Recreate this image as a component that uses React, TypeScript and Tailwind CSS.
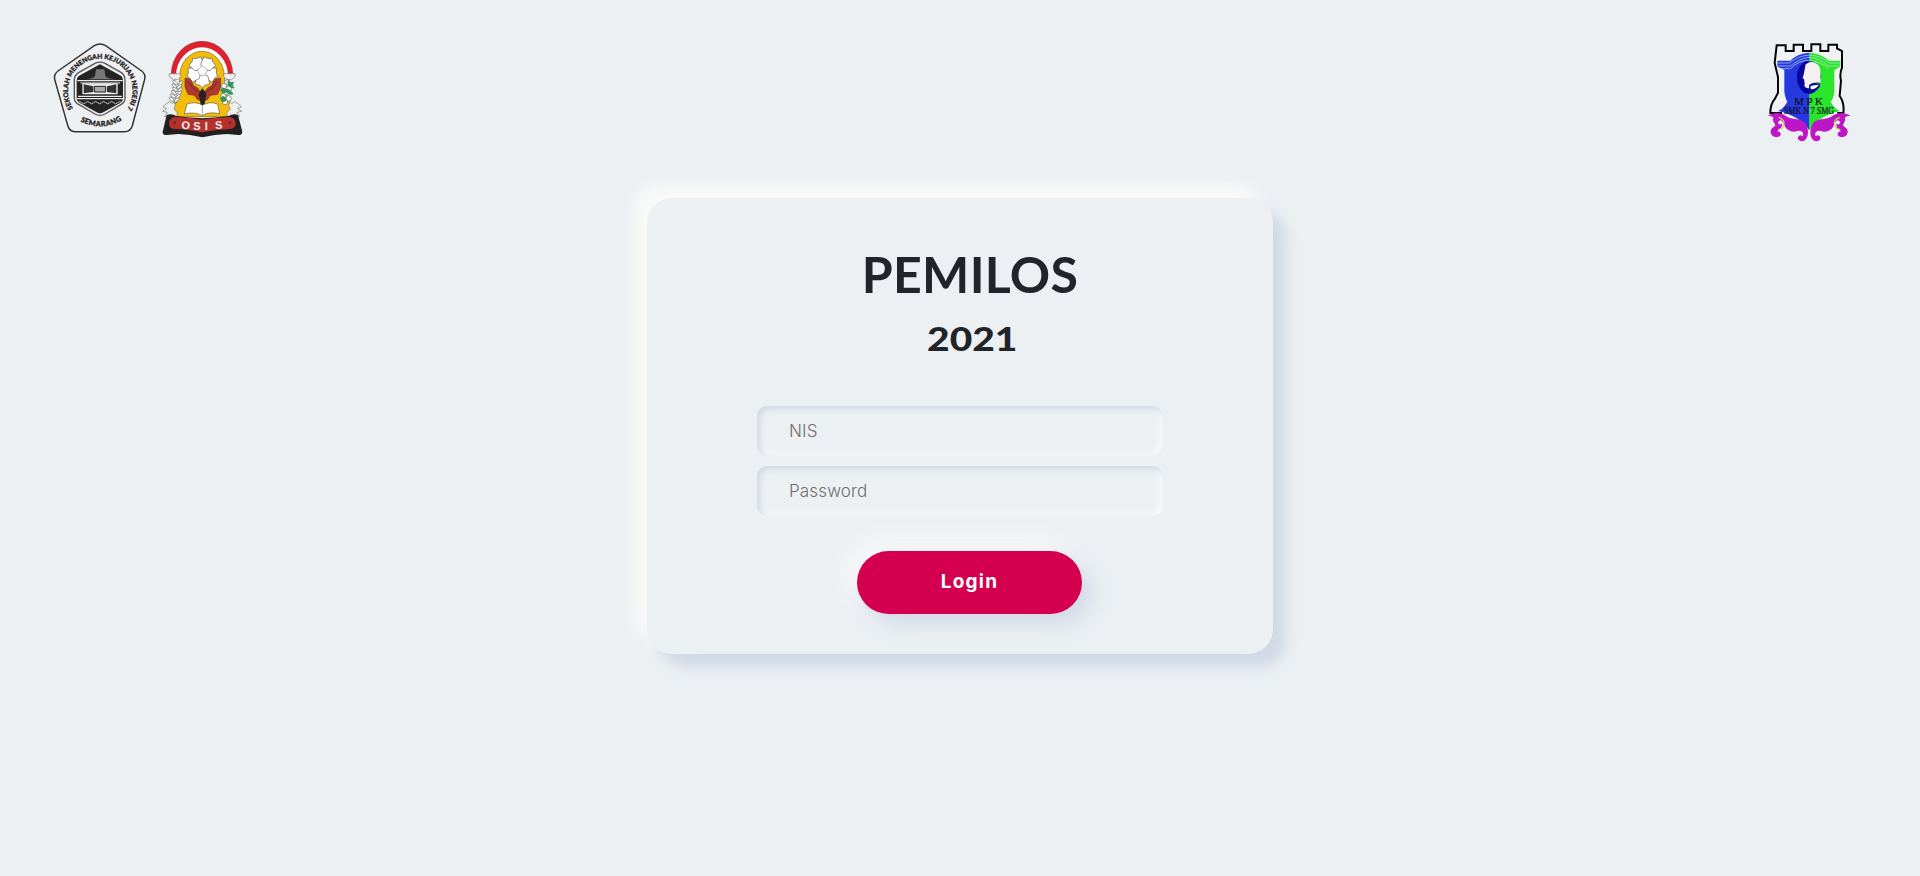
import React from "react";

function SchoolLogo() {
  return (
    <svg width="110" height="105" viewBox="0 0 330 315" role="img">
      <defs>
        <path id="ringTop" d="M84 220 A97 97 0 1 1 242 228" />
        <path id="ringBottom" d="M83 242 A122 122 0 0 0 248 242" />
      </defs>
      <path d="M148 32 Q165 22 182 32 L290 108 Q303 118 299 133 L262 272 Q256 290 239 290 L90 290 Q74 290 69 274 L29 133 Q26 118 39 108 Z" fill="#eef0f2" stroke="#333" strokeWidth="4.5" />
      <path d="M150 85 Q165 78 180 85 L228 112 Q240 120 240 134 L240 190 Q240 202 228 209 L180 237 Q165 245 150 237 L102 209 Q88 202 88 188 L88 134 Q88 120 102 112 Z" fill="#eee" stroke="#555" strokeWidth="4" />
      <path d="M165 88 L229 123 Q234 128 234 137 L234 190 Q234 198 227 203 L175 232 Q165 238 155 232 L103 203 Q95 198 95 190 L95 137 Q95 128 101 123 Z" fill="#242424" />
      <path d="M153 103 H178 L181 123 Q187 131 211 133 H119 Q145 132 150 123 Z" fill="#777" />
      <path d="M97 137 H233 M106 144 H225 M99 184 H231 M96 191 H234" stroke="#e8e8e8" strokeWidth="3.5" />
      <path d="M112 145 H218 V178 H112 Z" fill="#eee" />
      <path d="M116 148 L145 154 V171 L116 175 Z M214 148 L186 154 V171 L214 175 Z" fill="#333" />
      <path d="M148 154 H182 V171 H148 Z" fill="#aaa" stroke="#222" strokeWidth="3" />
      <path d="M98 203 q6 -7 12 0 t12 0 t12 0 t12 0 t12 0 t12 0 t12 0 t12 0 t12 0 t12 0 t12 0" fill="none" stroke="#c5c5c5" strokeWidth="3" />
      <g fill="#222" stroke="#222" strokeWidth="0.9" fontFamily="Lato, sans-serif" fontWeight="900">
        <text fontSize="20"><textPath href="#ringTop">SEKOLAH MENENGAH KEJURUAN NEGERI 7</textPath></text>
        <text fontSize="22" letterSpacing="1"><textPath href="#ringBottom" startOffset="28">SEMARANG</textPath></text>
      </g>
    </svg>
  );
}

const petals = [18, 90, 162, 234, 306];
const leftGrains = [[68, 143], [65, 153], [67, 163], [64, 173], [61, 183], [57, 193]];
const cottonBolls = [[217, 142], [207, 153], [222, 161], [213, 172], [205, 184], [221, 190], [210, 201]];

function OsisLogo() {
  return (
    <svg width="95" height="105" viewBox="0 0 285 315" role="img">
      <path d="M49 118 A92 99 0 0 1 233 118 H218 V240 H66 V118 Z" fill="#e0202e" stroke="#8b3035" strokeWidth="2" />
      <path d="M63 122 A78 85 0 0 1 219 122 V220 H63 Z" fill="#fff" />
      <path d="M74 125 A67 76 0 0 1 208 125 C211 150 211 172 220 193 Q232 215 232 245 H50 Q50 218 63 194 C73 171 73 150 74 125 Z" fill="#f2bd09" stroke="#836617" strokeWidth="2" />
      <path d="M43 116 H77 V125 L69 134 H55 L43 125 Z M206 116 H240 V125 L230 134 H216 L206 125 Z" fill="#eee" stroke="#777" strokeWidth="2" />
      <path d="M90 129 L108 133 L115 151 L129 160 L140 178 L137 198 L127 193 L118 181 L99 178 L90 155 Z M197 129 L178 133 L171 151 L157 160 L145 178 L148 198 L158 193 L166 181 L188 178 L197 155 Z" fill="#b3362f" stroke="#713029" strokeWidth="2" />
      <path d="M99 140 L112 158 L130 171 M186 140 L174 158 L154 171" fill="none" stroke="#5e342c" strokeWidth="3" />
      <g fill="#fff" stroke="#626262" strokeWidth="2">
        {petals.map((angle) => (
          <path key={angle} transform={`translate(142 109) rotate(${angle})`} d="M4 0 L15 -17 L38 -22 L42 -7 L49 0 L42 7 L38 22 L15 17 Z" />
        ))}
        <path d="M142 93 L157 104 L151 121 H133 L127 104 Z" fill="#fafafa" stroke="#999" />
      </g>
      <path d="M142 160 Q126 178 134 189 L137 211 H149 L151 189 Q159 177 142 160 Z" fill="#222" />
      <path d="M96 207 Q126 198 142 211 Q161 198 188 207 L194 236 Q160 229 142 242 Q121 229 88 237 Z" fill="#fff" stroke="#5c5c51" strokeWidth="2" />
      <path d="M142 211 V239" stroke="#777" strokeWidth="2" />
      <path d="M78 137 C70 157 81 178 61 208" fill="none" stroke="#666" strokeWidth="2" />
      <g fill="#fff" stroke="#626262" strokeWidth="2">
        {leftGrains.map(([x, y]) => (
          <React.Fragment key={y}>
            <ellipse cx={x - 7} cy={y} rx="9" ry="4" transform={`rotate(43 ${x - 7} ${y})`} />
            <ellipse cx={x + 8} cy={y + 2} rx="9" ry="4" transform={`rotate(-43 ${x + 8} ${y + 2})`} />
          </React.Fragment>
        ))}
        {cottonBolls.map(([x, y]) => <circle key={y} cx={x} cy={y} r="8" />)}
      </g>
      <path d="M219 137 L227 143 L235 142 L232 151 L237 159 L225 156 L219 150 Z M202 159 L211 163 L219 164 L213 173 L201 172 L197 166 Z M219 163 L227 168 L234 177 L226 178 L217 174 Z M202 184 L213 188 L211 198 L202 200 L196 191 Z" fill="#31965b" stroke="#31965b" strokeWidth="3" />
      <path d="M29 210 L44 199 L52 206 L57 201 L61 210 L57 222 L66 232 V245 H29 L37 232 L23 229 L35 221 L24 216 Z M254 210 L239 199 L231 206 L226 201 L221 210 L226 222 L216 232 V245 H254 L246 232 L260 229 L248 221 L259 216 Z" fill="#eee" stroke="#777" strokeWidth="2" />
      <path d="M35 240 Q50 234 64 243 Q142 256 220 243 Q236 234 249 240 L262 290 Q262 300 250 300 L216 297 Q180 298 142 307 Q104 298 70 297 L35 300 Q22 300 23 290 Z" fill="#202020" />
      <path d="M58 246 Q97 247 142 254 Q187 247 226 246 Q244 252 242 268 Q240 281 226 282 Q187 283 142 292 Q96 283 58 282 Q42 280 42 266 Q42 250 58 246 Z" fill="#b6312e" />
      <circle cx="59" cy="263" r="4" fill="#5e2928" />
      <circle cx="225" cy="263" r="4" fill="#5e2928" />
      <g fill="#f5eeee" fontFamily="Liberation Sans, sans-serif" fontWeight="700" fontSize="33">
        <text x="79" y="281" transform="rotate(4 80 281)">O</text>
        <text x="115" y="284">S</text>
        <text x="149" y="284">I</text>
        <text x="181" y="282" transform="rotate(-3 180 283)">S</text>
      </g>
    </svg>
  );
}

function Scroll() {
  return (
    <>
      <path d="M30 241 C52 231 67 237 80 247 C95 258 113 249 131 262 C142 272 146 298 137 310 C130 321 113 317 116 307 C119 300 129 304 129 307 C137 290 123 283 112 286 C98 292 82 284 77 274 C73 256 63 250 55 257 C48 264 58 274 64 269 C64 284 50 282 48 294 C58 287 66 299 55 303 C35 308 26 287 43 277 C57 267 36 263 42 250 Q44 243 30 241 Z" fill="#bd16c7" stroke="#bd16c7" strokeWidth="4" />
      <path d="M56 247 Q78 255 70 272 Q66 282 54 284" fill="none" stroke="#d3cf62" strokeWidth="3.5" />
    </>
  );
}

function MpkLogo() {
  return (
    <svg width="100" height="112" viewBox="0 0 300 336" role="img">
      <path d="M50 31 H77 V48 H101 V29 H129 V48 H154 V28 H181 V48 H205 V29 H231 V48 H246 V98 Q238 117 243 137 L239 183 Q254 204 250 234 H36 Q31 207 45 191 L54 173 V126 L44 84 Z" fill="#f1f2f3" />
      <path d="M66 234 H31 Q31 207 45 191 L54 173 V126 L44 84 L50 31 H77 V48 H101 V29 H129 V48 H154 V28 H181 V48 H205 V29 H231 V40 L246 48 V98 Q238 117 243 137 L239 183 Q254 204 250 234 H232" fill="none" stroke="#050505" strokeWidth="6" />
      <path d="M148 53 Q182 55 207 77 H241 V95 L223 105 V170 Q221 190 212 200 Q224 222 240 228 Q177 242 148 286 Z" fill="#2be52a" />
      <path d="M148 53 Q113 55 91 77 H52 V95 L73 105 V170 Q76 190 82 200 Q70 222 54 228 Q119 242 148 286 Z" fill="#2639e1" />
      <path d="M52 84 H88 Q115 62 148 60 Q184 63 208 84 H241 M52 93 H91 Q120 69 148 67 Q179 70 205 93 H241 M58 101 H91" fill="none" stroke="#c9e7f4" strokeOpacity="0.75" strokeWidth="2.5" />
      <path d="M91 101 Q117 75 148 76 Q184 80 207 101" fill="none" stroke="#e1f0f2" strokeOpacity="0.75" strokeWidth="2.5" />
      <ellipse cx="147" cy="127" rx="36" ry="50" fill="#06069c" />
      <path d="M148 77 Q183 82 184 126 Q181 161 148 176 Z" fill="#168b41" />
      <path d="M137 88 Q157 74 174 89 Q185 101 181 125 L183 145 Q172 139 162 145 L150 150 Q153 161 144 160 Q130 157 134 146 L132 132 Q125 132 131 119 Z" fill="#f5eff0" />
      <path d="M147 151 Q163 134 181 154 Q164 174 148 176 Z" fill="#06069c" />
      <path d="M151 154 Q163 149 176 150 Q166 164 153 163 Z" fill="#fff" />
      <Scroll />
      <g transform="translate(295 0) scale(-1 1)">
        <Scroll />
      </g>
      <path d="M130 250 L148 286 V250 Z" fill="#2639e1" />
      <path d="M148 250 H166 L148 286 Z" fill="#2be52a" />
      <g fill="#101323" stroke="#101323" strokeWidth="0.7" fontFamily="Liberation Serif, serif">
        <text x="103" y="210" fontSize="29" textLength="85" lengthAdjust="spacingAndGlyphs">M P K</text>
        <text x="72" y="238" fontSize="31" textLength="150" lengthAdjust="spacingAndGlyphs">SMK N 7 SMG</text>
      </g>
    </svg>
  );
}

const fieldClass =
  "block h-[50px] w-[406px] rounded-[10px] bg-[#ecf0f3] pl-8 pr-4 font-[Inter,sans-serif] text-[17px] font-light tracking-[0.15px] outline-none placeholder:text-[#6e6e6e] shadow-[inset_3px_3px_6px_#d1d9e6,inset_-3px_-3px_6px_#f9f9f9]";

export default function App() {
  return (
    <div className="min-h-screen overflow-hidden bg-[#ecf0f3] font-[Lato,sans-serif] text-[#212529]">
      <header className="flex h-[147px] justify-between pt-[35px] pl-[45px] pr-[60px]">
        <div className="flex items-start">
          <SchoolLogo />
          <OsisLogo />
        </div>
        <MpkLogo />
      </header>
      <main className="mx-auto mt-[51px] h-[456px] w-[626px] rounded-[25px] bg-[#ecf0f3] shadow-[13px_13px_14px_#d1d9e6,-13px_-13px_14px_#f9f9f9]">
        <form className="flex flex-col items-center pt-[46px]" onSubmit={(e) => e.preventDefault()}>
          <h1 className="ml-[20px] h-[60px] text-[50px] leading-[60px] font-bold tracking-[0.3px]">PEMILOS</h1>
          <h2 className="ml-[25px] mt-[14px] h-10 scale-x-[1.18] text-[33px] leading-10 font-black">2021</h2>
          <div className="mt-12 flex flex-col gap-2.5">
            <input className={fieldClass} placeholder="NIS" />
            <input className={fieldClass} type="password" placeholder="Password" />
          </div>
          <button className="mt-[35px] ml-[19px] h-[63px] w-[225px] rounded-full bg-[#d4004f] font-[Inter,sans-serif] text-[19px] font-bold tracking-[1.2px] text-white shadow-[10px_10px_22px_#d1d9e6,-10px_-10px_22px_#f9f9f9]">
            Login
          </button>
        </form>
      </main>
    </div>
  );
}
